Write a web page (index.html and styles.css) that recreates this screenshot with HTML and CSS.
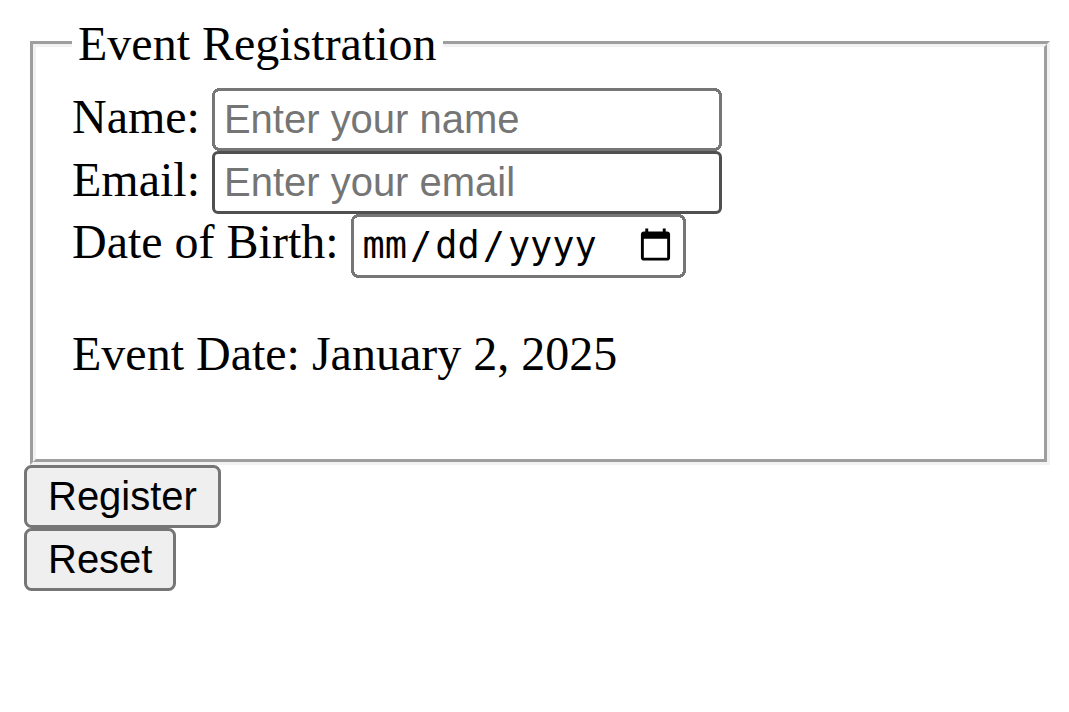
FILE: index.html
```html
<!DOCTYPE html>
<html lang="en">
<head>
<meta charset="utf-8">
<title>Event Registration</title>
<link rel="stylesheet" href="styles.css">
</head>
<body>
<div class="page">
  <form class="reg-form">
    <fieldset class="box">
      <legend class="box-title">Event Registration</legend>
      <label class="field-label" for="name">Name:</label> <input class="field" type="text" id="name" placeholder="Enter your name"><br>
      <label class="field-label" for="email">Email:</label> <input class="field field-hover" type="email" id="email" placeholder="Enter your email"><br>
      <label class="field-label" for="dob">Date of Birth:</label> <input class="field-date" type="date" id="dob"><br>
      <p class="event-date">Event Date: January 2, 2025</p>
    </fieldset>
    <button class="btn" type="submit">Register</button><br>
    <button class="btn" type="reset">Reset</button>
  </form>
</div>
</body>
</html>
```

FILE: styles.css
```css
html, body {
  margin: 0;
  background: #ffffff;
}

body {
  font-family: "Liberation Serif", "Times New Roman", serif;
  font-size: 16px;
  color: #000000;
}

.page {
  zoom: 3;
  padding: 5.4px 8px 0 8px;
}

.reg-form {
  margin: 0;
}

.box {
  box-sizing: border-box;
  width: 340px;
  margin: 0 2px;
  padding: 0.35em 0.75em 0.625em;
  border: 2px groove rgb(242, 242, 242);
}

.box-title {
  padding: 0 2px;
}

.field-label {
  font-family: "Liberation Serif", "Times New Roman", serif;
}

.field {
  box-sizing: border-box;
  width: 170px;
  font-family: "Liberation Sans", Arial, sans-serif;
  font-size: 13.3333px;
}

.field-hover {
  border: 1px solid #505050;
  border-radius: 2px;
  padding: 2px 3px;
}

.field-date {
  box-sizing: border-box;
  width: 111.7px;
  height: 21.2px;
  font-family: "DejaVu Sans Mono", monospace;
  font-size: 12.3px;
}

.event-date {
  margin: 16px 0;
}

.btn {
  font-family: "Liberation Sans", Arial, sans-serif;
  font-size: 13.3333px;
}
```
